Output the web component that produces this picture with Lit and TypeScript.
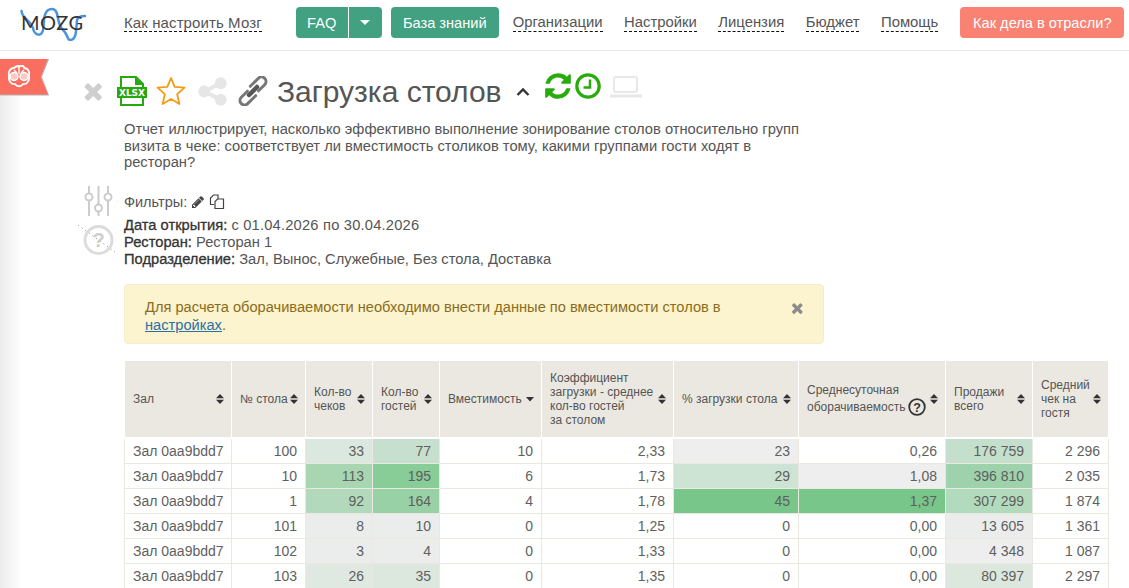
import { LitElement, html, css, svg } from 'lit'
import { customElement } from 'lit/decorators.js'

const HEAD = [
  { t: ['Зал'], w: 107 },
  { t: ['№ стола'], w: 74 },
  { t: ['Кол-во', 'чеков'], w: 67 },
  { t: ['Кол-во', 'гостей'], w: 67 },
  { t: ['Вместимость'], w: 102, sort: 'down' },
  { t: ['Коэффициент', 'загрузки - среднее', 'кол-во гостей', 'за столом'], w: 132 },
  { t: ['% загрузки стола'], w: 125 },
  { t: ['Среднесуточная', 'оборачиваемость'], w: 147, help: true },
  { t: ['Продажи', 'всего'], w: 87 },
  { t: ['Средний', 'чек на', 'гостя'], w: 76 },
]

type Cell = string | [string, string]

const ROWS: Cell[][] = [
  ['Зал 0aa9bdd7', '100', ['33', '#dbe8df'], ['77', '#c6dfce'], '10', '2,33', ['23', '#eeeeee'], '0,26', ['176 759', '#c4dfcc'], '2 296'],
  ['Зал 0aa9bdd7', '10', ['113', '#a7d6b0'], ['195', '#88cc98'], '6', '1,73', ['29', '#cde3d3'], ['1,08', '#eeeeee'], ['396 810', '#9dd2ac'], '2 035'],
  ['Зал 0aa9bdd7', '1', ['92', '#b2d9bb'], ['164', '#97d1a5'], '4', '1,78', ['45', '#78c68a'], ['1,37', '#78c68a'], ['307 299', '#b2dabd'], '1 874'],
  ['Зал 0aa9bdd7', '101', ['8', '#ebeded'], ['10', '#ebeded'], '0', '1,25', '0', '0,00', ['13 605', '#ebeded'], '1 361'],
  ['Зал 0aa9bdd7', '102', ['3', '#ebeded'], ['4', '#ebeded'], '0', '1,33', '0', '0,00', ['4 348', '#eeeeee'], '1 087'],
  ['Зал 0aa9bdd7', '103', ['26', '#dfe9e1'], ['35', '#dce8de'], '0', '1,35', '0', '0,00', ['80 397', '#dce8de'], '2 297'],
]

const fa = (d: string, fill: string, size: number) => html`<svg width=${size} height=${size} viewBox="0 0 1792 1792" fill=${fill}><path d=${d}></path></svg>`

const TIMES = 'M1298 1322q0 40-28 68l-136 136q-28 28-68 28t-68-28l-294-294-294 294q-28 28-68 28t-68-28l-136-136q-28-28-28-68t28-68l294-294-294-294q-28-28-28-68t28-68l136-136q28-28 68-28t68 28l294 294 294-294q28-28 68-28t68 28l136 136q28 28 28 68t-28 68l-294 294 294 294q28 28 28 68z'
const SHARE = 'M1344 1024q133 0 226.5 93.5t93.5 226.5-93.5 226.5-226.5 93.5-226.5-93.5-93.5-226.5q0-12 2-34l-360-180q-92 86-218 86-133 0-226.5-93.5t-93.5-226.5 93.5-226.5 226.5-93.5q126 0 218 86l360-180q-2-22-2-34 0-133 93.5-226.5t226.5-93.5 226.5 93.5 93.5 226.5-93.5 226.5-226.5 93.5q-126 0-218-86l-360 180q2 22 2 34t-2 34l360 180q92-86 218-86z'
const REFRESH = 'M1639 1056q0 5-1 7-64 268-268 434.5t-478 166.5q-146 0-282.5-55t-243.5-157l-129 129q-19 19-45 19t-45-19-19-45v-448q0-26 19-45t45-19h448q26 0 45 19t19 45-19 45l-137 137q71 66 161 102t187 36q134 0 250-65t186-179q11-17 53-117 8-23 30-23h192q13 0 22.5 9.5t9.5 22.5zm25-800v448q0 26-19 45t-45 19h-448q-26 0-45-19t-19-45 19-45l138-138q-148-137-349-137-134 0-250 65t-186 179q-11 17-53 117-8 23-30 23h-199q-13 0-22.5-9.5t-9.5-22.5v-7q65-268 270-434.5t480-166.5q146 0 284 55.5t245 156.5l130-129q19-19 45-19t45 19 19 45z'
const PENCIL = 'M491 1536l91-91-235-235-91 91v107h128v128h107zm523-928q0-22-22-22-10 0-17 7l-542 542q-7 7-7 17 0 22 22 22 10 0 17-7l542-542q7-7 7-17zm-54-192l416 416-832 832h-416v-416zm683 96q0 53-37 90l-166 166-416-416 166-165q36-38 90-38 53 0 91 38l235 234q37 39 37 91z'

const logo = html`<svg class="logo" width="70" height="36" viewBox="0 0 70 36">
  <path d="M1.500 6C2 14 10 14 13 23C14 31 23 33 23.500 22C24 14 24 4 32 4C40 4 36 20 43 25C48 29 47 35 50 35C56 35 56 28 57 15C58 11 62 11 65 11" fill="none" stroke="#4a94de" stroke-width="2.500" stroke-linecap="round"></path>
  <text x="1" y="25" font-family="Lato, 'Liberation Sans', sans-serif" font-size="20" fill="#333" textLength="62" lengthAdjust="spacing">MOZG</text>
</svg>`

const ribbon = html`<svg class="ribbon" width="50" height="37" viewBox="0 0 50 37">
  <path d="M0 0H48.500L41 18L48.500 36H0Z" fill="#fa6e5f"></path>
  <path d="M47.500 0H49L42 18L49 36.500H0V35.500H48L41 18Z" fill="#b5b0b0"></path>
  <path d="M14 9C17 6 21 7 19 8C21 6 25 7 24 9C28 9 30 13 29 17C30 22 26 26 23 25C21 28 17 28 15 25C12 26 8 22 9 17C8 13 10 9 14 9Z" fill="#fa6e5f" stroke="#fff" stroke-width="1.800" stroke-linejoin="round"></path>
  <circle cx="14" cy="17.500" r="4" fill="#fdc8c2" stroke="#fff" stroke-width="1.500"></circle>
  <circle cx="24" cy="17.500" r="4" fill="#fdc8c2" stroke="#fff" stroke-width="1.500"></circle>
  <path d="M19 8V15M14 11L17 14M24 11L21 14" stroke="#fff" stroke-width="1.300" fill="none"></path>
</svg>`

const xlsx = html`<svg width="30" height="30" viewBox="0 0 30 30">
  <path d="M4 11V1H19L26 8V29H4V22" fill="none" stroke="#27a80f" stroke-width="2"></path>
  <path d="M18 1V9H26Z" fill="#27a80f"></path>
  <rect x="0" y="11" width="30" height="11" fill="#27a80f"></rect>
  <text x="15" y="20.300" text-anchor="middle" font-family="'DejaVu Sans', sans-serif" font-size="9" font-weight="700" fill="#fff" textLength="26" lengthAdjust="spacingAndGlyphs">XLSX</text>
</svg>`

const star = html`<svg width="30" height="30" viewBox="0 0 30 30">
  <path d="M15 2L18.700 10.800 28.500 11.700 21.200 18.200 23.400 28 15 23 6.600 28 8.800 18.200 1.500 11.700 11.300 10.800Z" fill="none" stroke="#f39c12" stroke-width="1.800" stroke-linejoin="round"></path>
</svg>`

const chain = html`<svg width="30" height="30" viewBox="0 0 30 30" fill="none" stroke="#777" stroke-width="3" stroke-linecap="round">
  <path transform="translate(19.500 9.500) rotate(-45)" d="M-5.650 -4.500H5.650A4.500 4.500 0 0 1 5.650 4.500H-3"></path>
  <path transform="translate(10.500 20.500) rotate(135)" d="M-5.650 -4.500H5.650A4.500 4.500 0 0 1 5.650 4.500H-3"></path>
  <path d="M11 19L19 11" stroke="#555" stroke-width="4.500"></path>
</svg>`

const clock = html`<svg width="26" height="26" viewBox="0 0 26 26" fill="none" stroke="#2aab0c" stroke-width="3.200">
  <circle cx="13" cy="13" r="11.200"></circle>
  <path d="M15 6.500V14.500H8.500" stroke-width="2.500"></path>
</svg>`

const laptop = html`<svg width="32" height="22" viewBox="0 0 32 22" fill="none" stroke="#e8e8e8">
  <rect x="4" y="1" width="23" height="15" rx="2" stroke-width="2"></rect>
  <path d="M0 20H32" stroke-width="3"></path>
</svg>`

const chevron = html`<svg width="14" height="9" viewBox="0 0 14 9" fill="none" stroke="#333" stroke-width="2.400">
  <path d="M1.500 8L7 2.500 12.500 8"></path>
</svg>`

const sliders = html`<svg class="sl" width="30" height="30" viewBox="0 0 30 30" fill="none" stroke="#ccc" stroke-width="2">
  <path d="M5 0V7.500M5 14.500V30M14.500 0V18.500M14.500 25.500V30M24 0V7.500M24 14.500V30"></path>
  <circle cx="5" cy="11" r="3.500"></circle>
  <circle cx="14.500" cy="22" r="3.500"></circle>
  <circle cx="24" cy="11" r="3.500"></circle>
</svg>`

const question = html`<svg class="question" width="38" height="30" viewBox="0 0 38 30">
  <circle cx="20.500" cy="15" r="13.500" fill="none" stroke="#dcdcdc" stroke-width="3"></circle>
  <text x="20.500" y="22" text-anchor="middle" font-family="'Liberation Sans', sans-serif" font-weight="700" font-size="20" fill="#cfcfcf">?</text>
  <path d="M0 0L37 27" stroke="#8f8f8f" stroke-dasharray="1 3.500" fill="none"></path>
</svg>`

const clone = html`<svg width="16" height="16" viewBox="0 0 16 16" fill="none" stroke="#444" stroke-width="1.200">
  <path d="M5 10.500H1.500V4L4.500 1H9V5"></path>
  <path d="M6 14.500V7.500L8.500 5H14.500V14.500Z" fill="#fff"></path>
</svg>`

const sortIcon = (dir?: string) => html`<svg class="sort" width="8" height="10" viewBox="0 0 8 10" fill="#333">
  ${dir === 'down' ? svg`<path d="M0 3H8L4 7.500Z"></path>` : svg`<path d="M0 4.300H8L4 0ZM0 5.700H8L4 10Z"></path>`}
</svg>`

const helpIcon = html`<svg class="help" width="18" height="18" viewBox="0 0 18 18">
  <circle cx="9" cy="9" r="7.800" fill="none" stroke="#333" stroke-width="1.800"></circle>
  <text x="9" y="13.500" text-anchor="middle" font-family="'Liberation Sans', sans-serif" font-weight="700" font-size="12.500" fill="#333">?</text>
</svg>`

@customElement('app-root')
export class AppRoot extends LitElement {
  static styles = css`
    :host {
      display: block;
      height: 588px;
      overflow: hidden;
      font-family: 'Liberation Sans', Arial, sans-serif;
      color: #555;
      background: #fff;
    }

    .top {
      display: flex;
      align-items: center;
      box-sizing: border-box;
      height: 51px;
      border-bottom: 1px solid #e7e7e7;
      padding: 0 0 5px 20px;
      font-size: 15px;
    }

    .logo {
      display: block;
      flex: none;
      margin-right: 34px;
    }

    .navlink {
      color: #555;
      border-bottom: 1px dashed #111;
      line-height: 15px;
      padding-bottom: 1px;
      margin-top: 2px;
    }

    .first {
      letter-spacing: 0.1px;
    }

    .group {
      display: flex;
      margin: 0 9px 0 34px;
    }

    .btn {
      display: flex;
      align-items: center;
      justify-content: center;
      height: 31px;
      background: #41a180;
      color: #fff;
      border-radius: 4px;
      font-size: 14.600px;
    }

    .faq {
      width: 52px;
      border-radius: 4px 0 0 4px;
      border-right: 1px solid #fff;
    }

    .caret {
      width: 33px;
      border-radius: 0 4px 4px 0;
    }

    .caret i {
      border-top: 5px solid #fff;
      border-left: 5px solid transparent;
      border-right: 5px solid transparent;
    }

    .kb {
      width: 108px;
      margin-right: 14px;
    }

    .links {
      display: flex;
      gap: 21.500px;
      font-size: 14.850px;
    }

    .ask {
      width: 164px;
      margin-left: 22px;
      background: #f98272;
    }

    .page {
      position: relative;
      padding: 0 20px 0 83px;
    }

    .page::before {
      content: '';
      position: absolute;
      left: 0;
      top: 40px;
      bottom: 0;
      width: 22px;
      background: linear-gradient(to right, #ececec, #fff);
    }

    .ribbon {
      position: absolute;
      left: 0;
      top: 8px;
    }

    .tools {
      display: flex;
      align-items: center;
      height: 40px;
      padding-top: 20px;
    }

    .tools svg {
      display: block;
      flex: none;
    }

    .tools h1 {
      margin: 2px 0 0 9px;
      font-size: 30px;
      font-weight: 400;
      line-height: 38px;
      color: #555;
    }

    .x { margin: 0 8px 0 0; }
    .xl { margin-right: 9px; }
    .st { margin-right: 10px; }
    .sh { margin-right: 9px; }
    .chev { margin: 0 13px 0 14px; }
    .ref { margin: 0 2px 10px 0; }
    .cl { margin: 0 9px 10px 0; }
    .lap { margin-bottom: 9px; }

    .desc {
      margin: 10px 0 0 41px;
      width: 700px;
      font-size: 14.720px;
      line-height: 16.500px;
    }

    .filters {
      display: flex;
      margin-top: 15.500px;
    }

    .side {
      width: 41px;
      flex: none;
      display: flex;
      flex-direction: column;
    }

    .sl {
      margin-left: 1px;
    }

    .question {
      margin: 9px 0 0 -5px;
    }

    .flabel {
      display: flex;
      align-items: center;
      gap: 4px;
      height: 17px;
      font-size: 14.500px;
      margin: 7px 0 7px;
    }

    .meta {
      font-size: 14.700px;
      line-height: 17px;
    }

    .meta b {
      font-weight: 400;
      -webkit-text-stroke: 0.3px #333;
      color: #333;
    }

    .date {
      letter-spacing: 0.2px;
    }

    .alert {
      display: flex;
      justify-content: space-between;
      box-sizing: border-box;
      margin: 16px 0 0 41px;
      width: 700px;
      height: 60px;
      padding: 13px 20px;
      background: #fcf3cf;
      border: 1px solid #faeccb;
      border-radius: 4px;
      color: #8a6d1b;
      font-size: 14.650px;
      line-height: 18px;
    }

    .alert a {
      color: #2a6fa8;
      text-decoration: underline;
    }

    .close {
      flex: none;
      align-self: flex-start;
      margin: 2px -4px 0 0;
    }

    .close svg {
      display: block;
    }

    table {
      margin: 17px 0 0 41px;
      border-collapse: collapse;
      table-layout: fixed;
      width: 985px;
    }

    th {
      box-sizing: border-box;
      height: 77px;
      padding: 0 7px 0 8px;
      background: #ebe8e1;
      border: 1px solid #fff;
      border-top: 0;
      border-bottom: 2px solid #fff;
      font-size: 12px;
      line-height: 14px;
      font-weight: 400;
      text-align: left;
      color: #555;
      white-space: nowrap;
    }

    .th {
      display: flex;
      align-items: center;
      justify-content: space-between;
    }

    .sort, .help {
      flex: none;
      display: block;
    }

    .help {
      margin: 0 0 0 2.500px;
    }

    .help-line {
      display: flex;
      align-items: center;
      margin-top: 1px;
    }

    td {
      box-sizing: border-box;
      height: 25px;
      padding: 0 8px;
      border: 1px solid #ebe8e1;
      font-size: 14px;
      line-height: 16px;
      text-align: right;
      white-space: nowrap;
      color: #5f5f5f;
    }

    td:first-child {
      text-align: left;
    }
  `

  renderCell(c: Cell) {
    return Array.isArray(c)
      ? html`<td style="background:${c[1]}">${c[0]}</td>`
      : html`<td>${c}</td>`
  }

  render() {
    return html`
      <div class="top">
        ${logo}
        <span class="navlink first">Как настроить Мозг</span>
        <div class="group">
          <div class="btn faq">FAQ</div>
          <div class="btn caret"><i></i></div>
        </div>
        <div class="btn kb">База знаний</div>
        <div class="links">
          <span class="navlink">Организации</span>
          <span class="navlink">Настройки</span>
          <span class="navlink">Лицензия</span>
          <span class="navlink">Бюджет</span>
          <span class="navlink">Помощь</span>
        </div>
        <div class="btn ask">Как дела в отрасли?</div>
      </div>
      <div class="page">
        ${ribbon}
        <div class="tools">
          <span class="x">${fa(TIMES, '#cfcfcf', 26)}</span>
          <span class="xl">${xlsx}</span>
          <span class="st">${star}</span>
          <span class="sh">${fa(SHARE, '#e6e6e6', 33)}</span>
          <span>${chain}</span>
          <h1>Загрузка столов</h1>
          <span class="chev">${chevron}</span>
          <span class="ref">${fa(REFRESH, '#2aab0c', 30)}</span>
          <span class="cl">${clock}</span>
          <span class="lap">${laptop}</span>
        </div>
        <div class="desc">Отчет иллюстрирует, насколько эффективно выполнение зонирование столов относительно групп визита в чеке: соответствует ли вместимость столиков тому, какими группами гости ходят в ресторан?</div>
        <div class="filters">
          <div class="side">${sliders}${question}</div>
          <div>
            <div class="flabel">Фильтры: ${fa(PENCIL, '#444', 14)} ${clone}</div>
            <div class="meta">
              <div><b>Дата открытия:</b> <span class="date">с 01.04.2026 по 30.04.2026</span></div>
              <div><b>Ресторан:</b> Ресторан 1</div>
              <div><b>Подразделение:</b> Зал, Вынос, Служебные, Без стола, Доставка</div>
            </div>
          </div>
        </div>
        <div class="alert">
          <div>Для расчета оборачиваемости необходимо внести данные по вместимости столов в <a>настройках</a>.</div>
          <span class="close">${fa(TIMES, '#8c8c8c', 16)}</span>
        </div>
        <table>
          <colgroup>${HEAD.map((h) => html`<col style="width:${h.w}px" />`)}</colgroup>
          <thead>
            <tr>
              ${HEAD.map(
                (h) => html`<th>
                  <div class="th">
                    <div>
                      ${h.help
                        ? html`<div>${h.t[0]}</div><div class="help-line">${h.t[1]}${helpIcon}</div>`
                        : h.t.map((l) => html`<div>${l}</div>`)}
                    </div>
                    ${sortIcon(h.sort)}
                  </div>
                </th>`
              )}
            </tr>
          </thead>
          <tbody>
            ${ROWS.map((r) => html`<tr>${r.map((c) => this.renderCell(c))}</tr>`)}
          </tbody>
        </table>
      </div>
    `
  }
}
